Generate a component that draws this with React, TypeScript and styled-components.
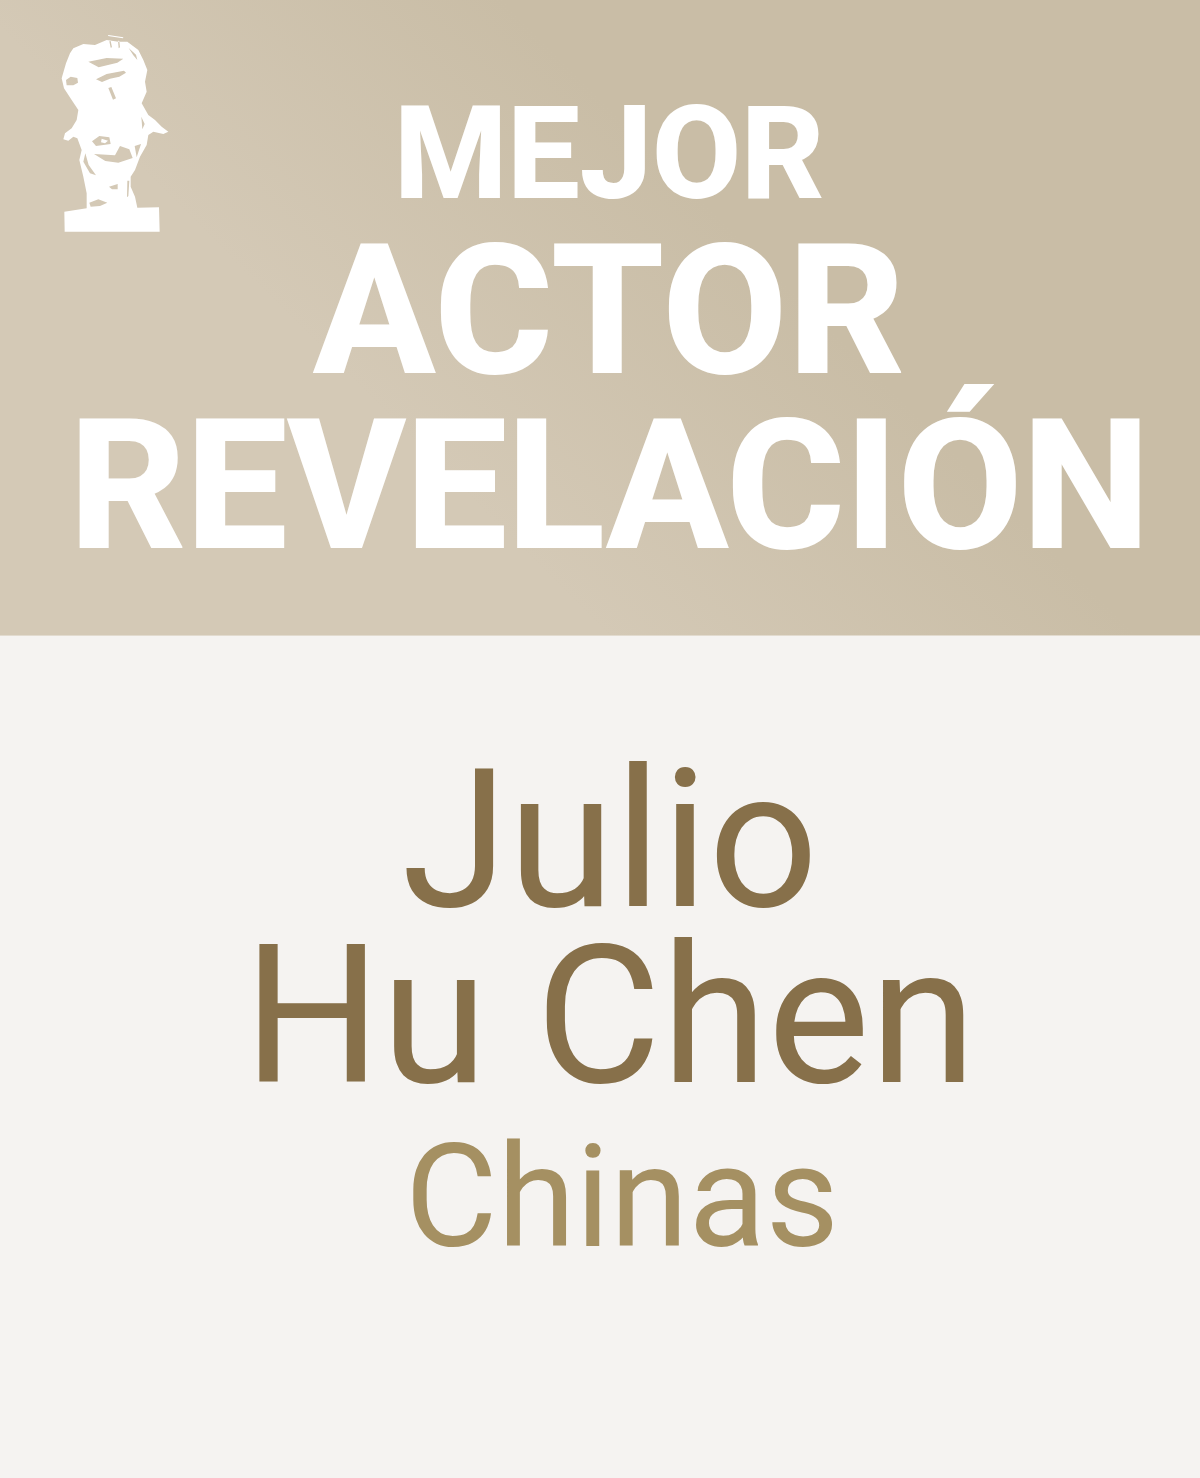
import React from "react";
import styled, { createGlobalStyle } from "styled-components";

const Global = createGlobalStyle`
  html, body { margin: 0; padding: 0; background: #f5f3f1; }
  body { font-family: Roboto, "Liberation Sans", sans-serif; }
`;
const Page = styled.div`
  width: 1200px; height: 1478px; display: flex; flex-direction: column; overflow: hidden;
`;
const Header = styled.header`
  position: relative; height: 636px; box-sizing: border-box; padding: 85px 0 0 18px;
  background: linear-gradient(45deg, #d4c9b6 0%, #d4c9b6 33%, #c9bda6 62%, #c9bda6 100%);
  border-bottom: 1px solid #e2dbcf;
  color: #fff; display: flex; flex-direction: column; align-items: center;
  font-weight: 800; text-transform: uppercase;
`;
const Logo = styled.svg`
  position: absolute; left: 40px; top: 20px; width: 150px; height: 230px;
`;
const Small = styled.div`
  font-size: 130px; line-height: 138px; letter-spacing: -0.6px;
`;
const Big = styled.div<{ $tight?: boolean }>`
  font-size: 182px; line-height: 175px; white-space: nowrap;
  letter-spacing: ${(p) => (p.$tight ? "-1px" : "0")};
`;
const Body = styled.main`
  flex: 1; display: flex; flex-direction: column; align-items: center; padding: 116px 0 0 20px;
`;
const Name = styled.div`
  font-size: 193px; line-height: 176px; color: #87704a; text-align: center;
`;
const Country = styled.div`
  font-size: 142px; line-height: 170px; color: #a59062; margin: 9px 0 0 24px;
`;

const outline =
  "M100 85L130 72L165 75L200 60L235 65L262 65L295 90L310 120L322 150L315 185L320 215L305 250L325 285L345 300L365 320L385 335L370 342L340 335L325 345L320 375L300 410L285 450L272 470L272 500L285 530L292 563L357 562L359 635L74 635L73 575L140 565L140 520L130 470L118 420L125 390L112 355L100 350L85 362L70 358L75 340L95 325L110 300L115 270L95 240L72 205L65 175L78 130L90 100Z";
const holes = [
  "M145 125L200 114L250 116L232 128L176 142Z",
  "M168 178L200 162L252 152L258 158L238 170L210 176L186 186Z",
  "M205 204L214 201L228 235L219 239Z",
  "M78 180L92 170L112 174L114 188L100 196L80 196Z",
  "M208 64L212 63L216 82L212 83Z",
  "M234 62L238 63L240 82L236 85Z",
  "M266 84L288 104L292 120L280 106Z",
  "M178 348L208 352L212 372L168 378L156 364Z",
  "M162 402L225 406L240 378L268 388L278 414L235 428L196 423Z",
  "M284 378L303 372L290 412Z",
  "M130 425L136 400L146 435L168 466L150 460Z",
  "M207 500L233 492L233 508L216 508Z",
  "M262 482L268 482L265 528L261 532Z",
  "M148 548L175 538L202 548L180 558L152 560Z",
  "M304 290L314 312L307 328Z",
];

export default function App() {
  return (
    <Page>
      <Global />
      <Header>
        <Logo viewBox="0 0 450 690" aria-hidden="true">
          <path fill="#fff" fillRule="evenodd" d={`${outline}${holes.join("")}`} />
          <path fill="#fff" d="M205 45L250 52L249 55L204 48Z" />
          <path fill="#fff" d="M185 356L204 362L195 370L183 367Z" />
        </Logo>
        <Small>Mejor</Small>
        <Big>Actor</Big>
        <Big $tight>Revelación</Big>
      </Header>
      <Body>
        <Name>Julio<br />Hu Chen</Name>
        <Country>Chinas</Country>
      </Body>
    </Page>
  );
}
